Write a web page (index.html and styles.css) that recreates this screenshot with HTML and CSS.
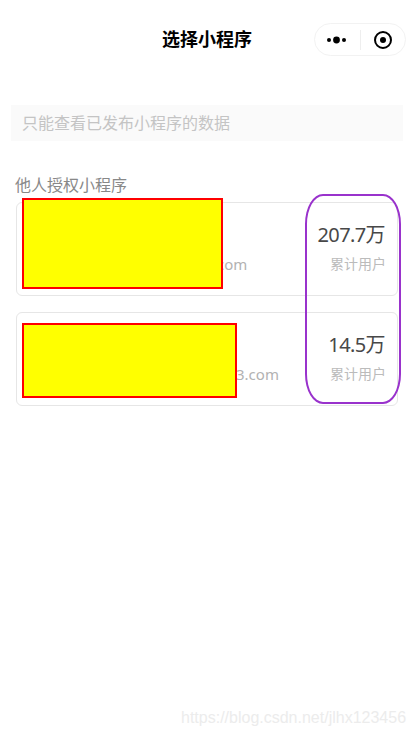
FILE: index.html
```html
<!DOCTYPE html>
<html lang="zh">
<head>
<meta charset="utf-8">
<title>选择小程序</title>
<link rel="stylesheet" href="styles.css">
</head>
<body>
<div class="page">
  <header class="nav">
    <h1 class="nav-title">选择小程序</h1>
    <div class="capsule">
      <svg class="cap-icon dots" width="24" height="10" viewBox="0 0 24 10"><circle cx="3" cy="5" r="2" fill="#000"/><circle cx="10.5" cy="5" r="3.4" fill="#000"/><circle cx="18" cy="5" r="2" fill="#000"/></svg>
      <span class="cap-sep"></span>
      <svg class="cap-icon" width="20" height="20" viewBox="0 0 20 20"><circle cx="10" cy="10" r="8" fill="none" stroke="#000" stroke-width="2"/><circle cx="10" cy="10" r="3" fill="#000"/></svg>
    </div>
  </header>
  <div class="notice">只能查看已发布小程序的数据</div>
  <h2 class="section-title">他人授权小程序</h2>
  <div class="list">
    <div class="card">
      <div class="mail">.com</div>
      <div class="stat">
        <div class="stat-num">207.7万</div>
        <div class="stat-label">累计用户</div>
      </div>
      <div class="mask mask-one"></div>
    </div>
    <div class="card">
      <div class="mail mail-two">3.com</div>
      <div class="stat">
        <div class="stat-num">14.5万</div>
        <div class="stat-label">累计用户</div>
      </div>
      <div class="mask mask-two"></div>
    </div>
    <div class="ring"></div>
  </div>
  <div class="watermark">https://blog.csdn.net/jlhx123456</div>
</div>
</body>
</html>
```
FILE: styles.css
```css
* { box-sizing: border-box; }
html, body { margin: 0; padding: 0; background: #fff; }
body { font-family: "Noto Sans", "Noto Sans CJK SC", sans-serif; }
.page { position: relative; width: 414px; height: 736px; overflow: hidden; padding-top: 23px; }
.nav { position: relative; height: 33px; display: flex; justify-content: flex-end; padding-right: 8px; }
.nav-title { position: absolute; left: 0; right: 0; top: 0; margin: 0; text-align: center; font-size: 18px; line-height: 33px; font-weight: 700; color: #000; }
.capsule { width: 92px; height: 33px; border: 1px solid #f2f2f2; border-radius: 17px; display: flex; align-items: center; padding-left: 11px; }
.dots { margin-right: 10px; }
.cap-sep { width: 1px; height: 20px; background: #eee; margin-right: 12px; }
.cap-icon { display: block; flex: none; }
.notice { margin: 49px 11px 0; height: 36px; background: #fafafa; padding-left: 11px; font-size: 16px; line-height: 36px; color: #c4c4c4; }
.section-title { margin: 33px 0 0 15px; font-size: 16px; line-height: 22px; font-weight: 400; color: #888; }
.list { position: relative; margin: 6px 16px 0; width: 382px; display: flex; flex-direction: column; gap: 16px; }
.card { position: relative; height: 94px; border: 1px solid #e6e6e6; border-radius: 6px; display: flex; justify-content: space-between; padding: 0 11px 0 5px; }
.mail { padding: 50px 0 0 191px; font-size: 15px; line-height: 22px; color: #b2b2b2; }
.mail-two { padding-left: 214px; }
.stat { text-align: right; padding-top: 18px; }
.stat-num { font-size: 20px; line-height: 28px; color: #484848; letter-spacing: -0.6px; padding-right: 1px; }
.stat-label { margin-top: 5px; font-size: 14px; line-height: 20px; color: #bbb; }
.mask { position: absolute; left: 5px; background: #ff0; border: 2px solid #f00; }
.mask-one { top: -5px; width: 201px; height: 91px; }
.mask-two { top: 10px; width: 215px; height: 75px; }
.ring { position: absolute; left: 289px; top: -8px; width: 96px; height: 210px; border: 2px solid #9932cc; border-radius: 18px / 30px; }
.watermark { position: absolute; left: 181px; top: 708px; font-family: "Liberation Sans", sans-serif; font-size: 16px; line-height: 20px; color: #ececec; white-space: nowrap; }
```
